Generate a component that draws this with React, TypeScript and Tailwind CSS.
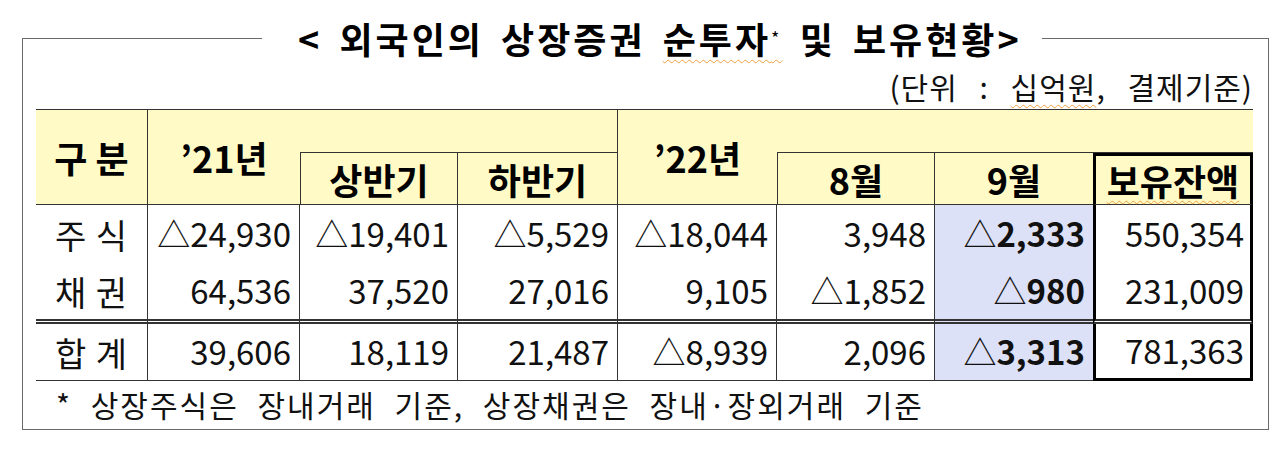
import React from "react";

const FONT = { fontFamily: '"Noto Sans CJK KR", "Noto Sans", sans-serif' };

const widths = [
  "w-[112px]",
  "w-[152px]",
  "w-[158px]",
  "w-[160px]",
  "w-[159px]",
  "w-[158px]",
  "w-[158px]",
  "w-[160px]",
];

type Row = { label: string; vals: string[] };

const rows: Row[] = [
  { label: "주 식", vals: ["△24,930", "△19,401", "△5,529", "△18,044", "3,948", "△2,333", "550,354"] },
  { label: "채 권", vals: ["64,536", "37,520", "27,016", "9,105", "△1,852", "△980", "231,009"] },
  { label: "합 계", vals: ["39,606", "18,119", "21,487", "△8,939", "2,096", "△3,313", "781,363"] },
];

function Num({ v, bold }: { v: string; bold?: boolean }) {
  const neg = v.startsWith("△");
  const n = neg ? v.slice(1) : v;
  return (
    <span>
      {neg && <span className="font-normal">△</span>}
      <span className={bold ? "font-bold" : "font-normal"}>{n}</span>
    </span>
  );
}

function BodyRow({ row, idx }: { row: Row; idx: number }) {
  const isMid = idx === 1;
  const isLast = idx === 2;
  const h = idx === 0 ? "h-[58px]" : idx === 1 ? "h-[61px]" : "h-[57px]";
  const bottom = isMid
    ? "border-b-[5px] [border-bottom-style:double] border-b-[#333]"
    : isLast
    ? "border-b border-b-[#333]"
    : "";
  return (
    <div className={`flex ${h}`}>
      <div className={`${widths[0]} ${bottom} border-r border-r-[#333] flex items-center justify-center text-[34px] tracking-[1px]`}>
        {row.label}
      </div>
      {row.vals.map((v, i) => {
        const col = i + 1;
        const w = widths[col];
        let cls = "";
        if (col <= 5) cls = "border-r border-r-[#333]";
        if (col === 6) cls = "bg-[#dde1f7]";
        if (col === 7)
          cls = isLast
            ? "border-x-[3px] border-x-black border-b-[3px] border-b-black"
            : "border-x-[3px] border-x-black";
        const b = col === 7 && isLast ? "" : bottom;
        return (
          <div
            key={i}
            className={`${w} ${cls} ${b} flex items-center justify-end ${col === 7 ? "pr-[6px]" : "pr-[8px]"} text-[33px]`}
          >
            <Num v={v} bold={col === 6} />
          </div>
        );
      })}
    </div>
  );
}

export default function App() {
  return (
    <div className="w-[1280px] h-[458px] bg-white text-[#111] overflow-hidden" style={FONT}>
      <fieldset className="ml-[22px] mt-[18px] w-[1247px] h-[412px] border border-[#6a6a6a]">
        <legend className="ml-[239px] pl-[36px] pr-[20px] text-[36px] leading-[40px] font-bold tracking-[3px] [word-spacing:6px] text-black">
          {"< 외국인의 상장증권 "}
          <span className="underline decoration-wavy decoration-1 decoration-[#f0a040] underline-offset-[5px]">
            순투자<sup className="text-[18px] font-normal">*</sup>
          </span>
          {" 및 보유현황>"}
        </legend>
        <div className="flex justify-end pr-[15px] mt-[10px] text-[30px] leading-[36px] tracking-[1px] [word-spacing:14px] text-[#111]">
          <span>
            (단위 :{" "}
            <span className="underline decoration-wavy decoration-1 decoration-[#f0a040] underline-offset-[5px]">
              십억원
            </span>
            , 결제기준)
          </span>
        </div>
        <div className="ml-[13px] mt-[5px] w-[1217px] border-t border-t-[#333]">
          {/* header */}
          <div className="grid grid-cols-[112px_152px_158px_160px_159px_158px_158px_160px] grid-rows-[43px_52px] bg-[#fffac6] font-bold text-[36px] text-black">
            <div className="col-start-1 row-start-1 row-span-2 border-r border-b border-[#333] flex items-center justify-center">
              구 분
            </div>
            <div className="col-start-2 row-start-1 row-span-2 border-b border-[#333] flex items-center justify-center">
              ’21년
            </div>
            <div className="col-start-3 col-span-2 row-start-1 border-b border-r border-[#333]"></div>
            <div className="col-start-3 row-start-2 border-l border-r border-b border-[#333] flex items-center justify-center">
              상반기
            </div>
            <div className="col-start-4 row-start-2 border-r border-b border-[#333] flex items-center justify-center">
              하반기
            </div>
            <div className="col-start-5 row-start-1 row-span-2 border-b border-[#333] flex items-center justify-center">
              ’22년
            </div>
            <div className="col-start-6 col-span-3 row-start-1 border-b border-[#333]"></div>
            <div className="col-start-6 row-start-2 border-l border-r border-b border-[#333] flex items-center justify-center">
              8월
            </div>
            <div className="col-start-7 row-start-2 border-b border-[#333] flex items-center justify-center">
              9월
            </div>
            <div className="col-start-8 row-start-2 border-t-[3px] border-x-[3px] border-black border-b border-b-[#333] flex items-center justify-center">
              <span className="underline decoration-wavy decoration-1 decoration-[#f0a040] underline-offset-[4px]">
                보유잔액
              </span>
            </div>
          </div>
          {rows.map((r, i) => (
            <BodyRow key={i} row={r} idx={i} />
          ))}
          <div className="pl-[20px] pt-[5px] text-[30px] leading-[36px] tracking-[2px] [word-spacing:10px] text-[#111]">
            * 상장주식은 장내거래 기준, 상장채권은 장내·장외거래 기준
          </div>
        </div>
      </fieldset>
    </div>
  );
}
